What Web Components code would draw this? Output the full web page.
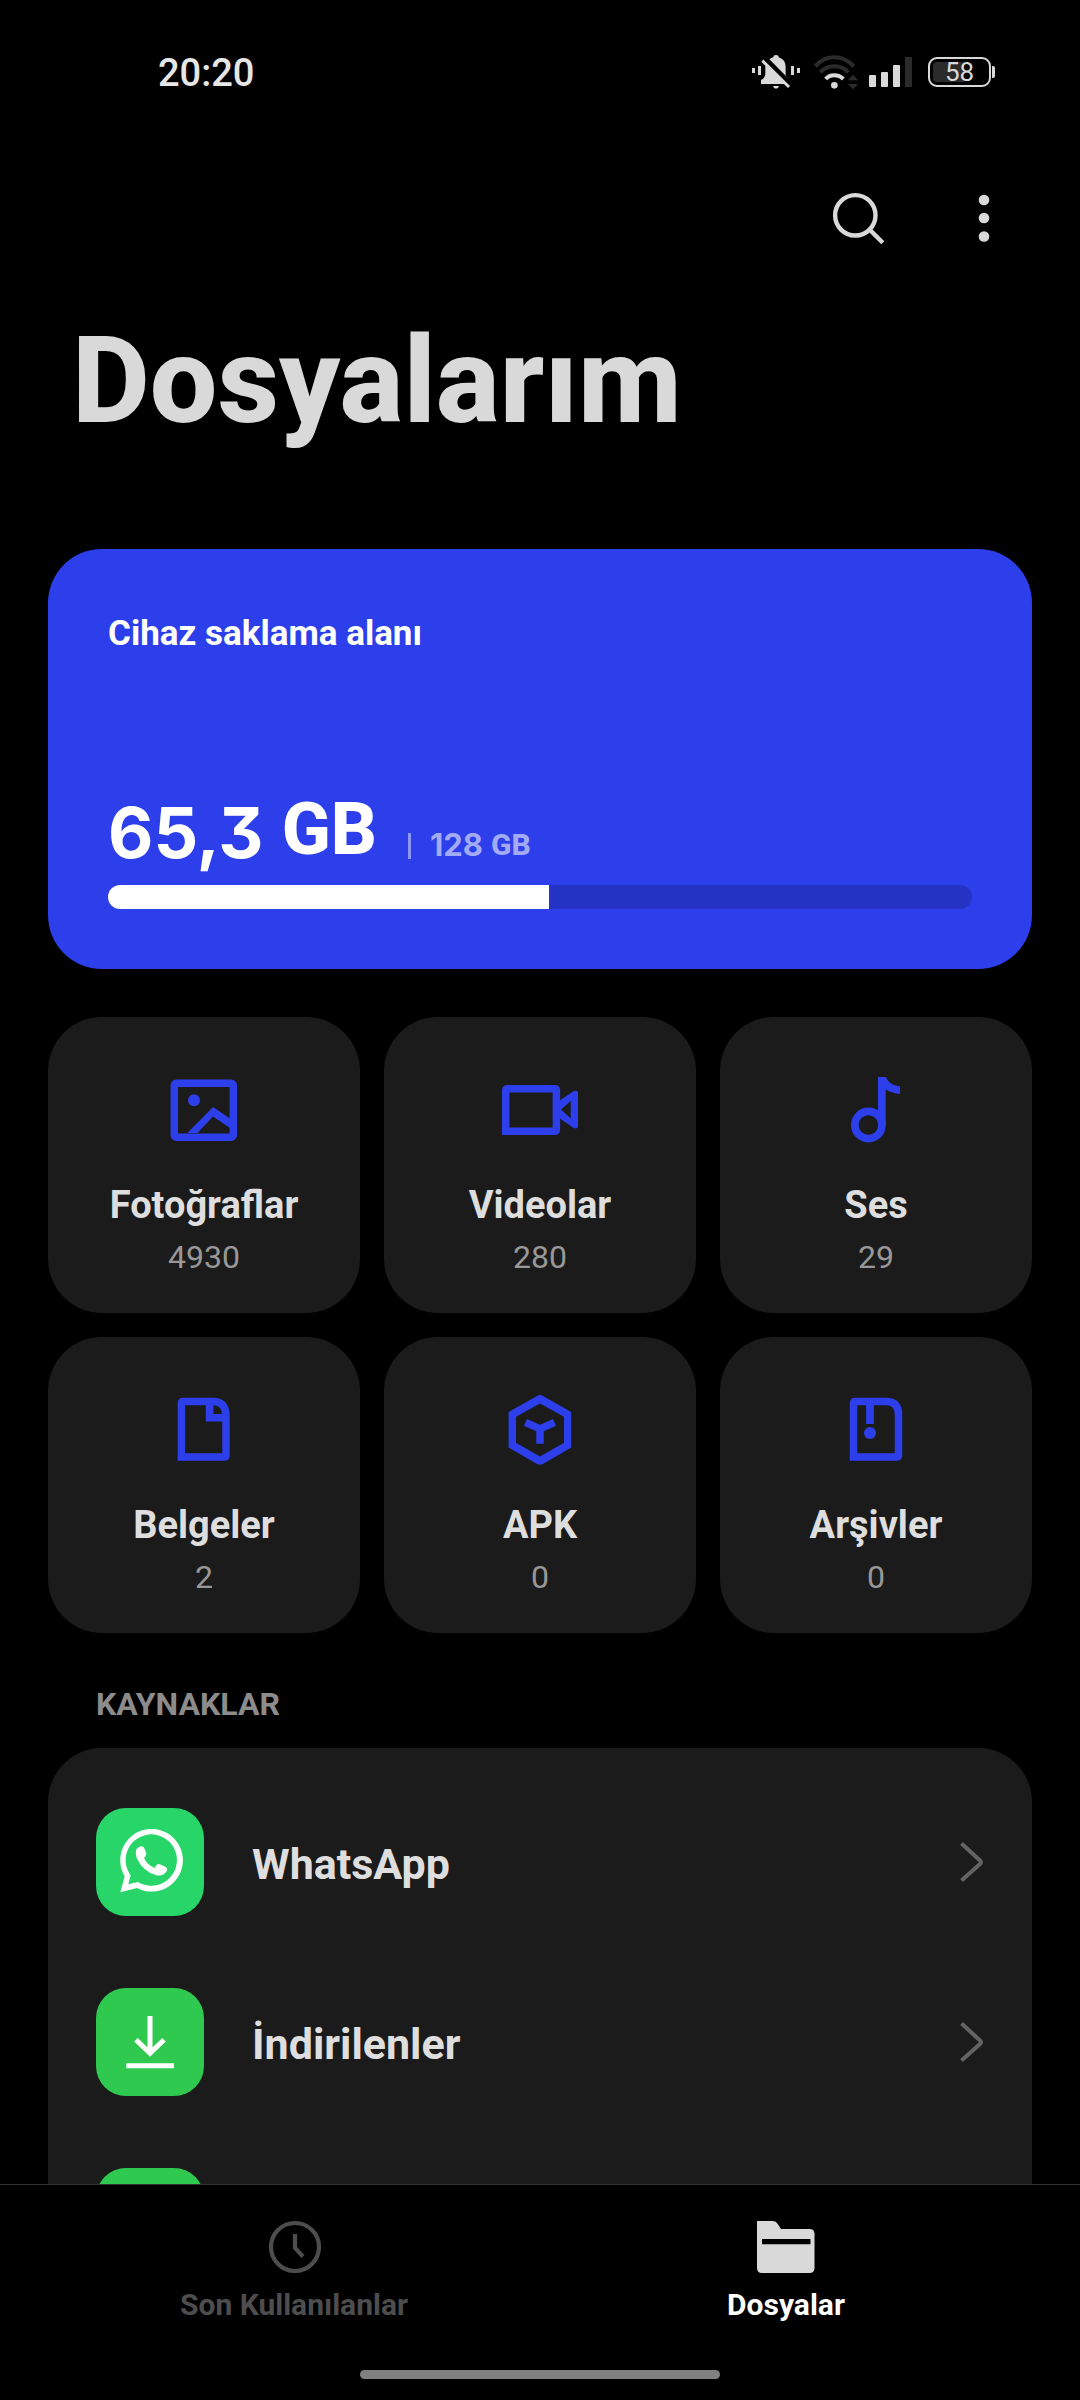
<!DOCTYPE html>
<html lang="tr">
<head>
<meta charset="utf-8">
<meta name="viewport" content="width=device-width, initial-scale=1">
<title>Dosyalarım</title>
<style>
  html, body { margin: 0; height: 100%; background: #000; }
  body { font-family: Roboto, "Noto Sans", sans-serif; color: #dcdcdc; }
</style>
</head>
<body>
<files-app></files-app>

<script>
const ICONS = {
  muted: ['96 75 144 102', `<g fill="#d9d9d9"><path d="M160 82a8 7 0 0 1 16 0q21 6 21 31v22q1 6 9 11v0l-58-58q5-4 12-6zM136 103l60 59h-73v-12q13-6 13-20zM159 168h18q-2 8-9 8t-9-8z"/><path d="M96 114h9v15h-9zM114 108h9v27h-9zM213 108h9v27h-9zM231 114h9v15h-9z"/></g><path d="M127 92l80 79" stroke="#d9d9d9" stroke-width="9"/><path d="M134 86l80 79" stroke="#000" stroke-width="6"/>`],
  wifi: ['282 72 132 105', `<g fill="none" stroke-width="12"><g stroke="#2b2b2b"><path d="M286 106q24-27 57-27t58 27"/><path d="M301 124q17-18 42-18t42 18"/></g><path d="M317 144q10-11 26-11t27 11" stroke="#d9d9d9"/></g><circle cx="343" cy="163" r="10" fill="#d9d9d9"/><path d="M383 148l16-17 15 17zM383 159h31l-15 16z" fill="#2b2b2b"/>`],
  signal: ['447 81 129 90', `<g fill="#d9d9d9"><rect x="447" y="135" width="21" height="36" rx="3"/><rect x="483" y="126" width="21" height="45" rx="3"/><rect x="519" y="105" width="21" height="66" rx="3"/></g><rect x="555" y="81" width="21" height="90" rx="3" fill="#2b2b2b"/>`],
  search: ['0 0 96 96', `<circle cx="45.300" cy="45.300" r="20.200" fill="none" stroke="#d9d9d9" stroke-width="4.400"/><path d="M59.500 59.500l13.300 13.300" stroke="#d9d9d9" stroke-width="4.400"/>`],
  more: ['0 0 96 96', `<g fill="#d9d9d9"><circle cx="48" cy="30" r="5.300"/><circle cx="48" cy="48" r="5.300"/><circle cx="48" cy="66.500" r="5.300"/></g>`],
  photo: ['0 0 96 96', `<rect x="18.300" y="21.300" width="59" height="54" rx="2" fill="none" stroke="currentColor" stroke-width="7.500"/><circle cx="38" cy="38.300" r="6" fill="currentColor"/><path d="M31.300 71L57 45l17 11.500v9.500L57 54.500 41.400 71z" fill="currentColor"/>`],
  video: ['0 0 96 96', `<path d="M13.700 69.300V28.700q0-2 2-2h46.700q2 0 2 2v38.600q0 2-2 2z" fill="none" stroke="currentColor" stroke-width="7.500"/><path fill-rule="evenodd" fill="currentColor" d="M67 39L81 29.600q5-2.600 5 2v31.800q0 4.600-5 2L67 56zM69 47.500l9.700 9V39z"/>`],
  audio: ['0 0 96 96', `<circle cx="40.400" cy="63" r="13.600" fill="none" stroke="currentColor" stroke-width="7.600"/><path d="M50 63V15h7.700q4.300 9 14.300 9.300v7.600q-8-.4-14.300-4.400V63z" fill="currentColor"/>`],
  doc: ['0 0 96 96', `<path d="M25.400 75V21.500q0-2 2-2H57q13 0 13 15V73q0 2-2 2z" fill="none" stroke="currentColor" stroke-width="7.500"/><path d="M53.600 20v15.800H70" fill="none" stroke="currentColor" stroke-width="7.600"/>`],
  apk: ['0 0 96 96', `<path d="M48 13q1.800 0 3 .9L79.200 30v35.500L51 82q-3 1.600-6 0L16.600 65.500V30L45 13.900q1.200-.9 3-.9zM48 21.500L24 34.800v26L48 74.500l24-13.700v-26z" fill="currentColor" fill-rule="evenodd"/><path d="M33.500 40.400L48 47l14.500-6.600M48 46v15.700" fill="none" stroke="currentColor" stroke-width="7.500"/>`],
  archive: ['0 0 96 96', `<path d="M25.500 75V21.500q0-2 2-2H58q12.500 0 12.500 13V73q0 2-2 2z" fill="none" stroke="currentColor" stroke-width="7.500"/><path d="M42 19v23" stroke="currentColor" stroke-width="7.800"/><circle cx="42" cy="51" r="6" fill="currentColor"/>`],
  whatsapp: ['0 0 324 324', `<g transform="translate(-168 -414)" fill="#fff"><path fill-rule="evenodd" d="M241 667L254 619A94 94 0 1 1 291 654zM265 643L294 636A77 77 0 1 0 272 616z"/><path d="M289 538q11-12 20-8 5 3 10 20 1 8-7 14 9 20 32 30 6-13 12-12 11 3 22 10 6 4 2 12-11 16-31 12-39-11-58-50-6-16-2-28z"/></g>`],
  download: ['0 0 324 324', `<g fill="none" stroke="#fff" stroke-width="15"><path d="M162 84v112M120 155l42 41 42-41M91 233h143"/></g>`],
  chevron: ['0 0 24 42', `<path d="M1.500 2.500L20 19.400q2 1.800 0 3.600L1.500 39.500" fill="none" stroke="#636363" stroke-width="4"/>`],
  clock: ['0 0 60 60', `<g fill="none" stroke="currentColor" stroke-width="4.200"><circle cx="31" cy="30" r="24"/><path d="M31 17v14l8 8.500"/></g>`],
  folder: ['0 0 60 60', `<path fill="#d9d9d9" fill-rule="evenodd" d="M1 4h16q3 0 4.400 2.500L25 12h28.500q5 0 5 5v34q0 5-5 5H6q-5 0-5-5zM6 22v5.300h48.500V22z"/>`]
};

class Base extends HTMLElement {
  connectedCallback() {
    if (this.shadowRoot) return;
    this.attachShadow({ mode: 'open' }).innerHTML = this.render();
  }
  attr(name) { return this.getAttribute(name) || ''; }
}

customElements.define('fm-icon', class extends Base {
  render() {
    const [box, body] = ICONS[this.attr('name')];
    return `<style>
      :host { display: block; flex: none; }
      svg { display: block; width: 100%; height: 100%; }
    </style><svg viewBox="${box}" aria-hidden="true">${body}</svg>`;
  }
});

customElements.define('status-bar', class extends Base {
  render() {
    return `<style>
      :host { display: flex; align-items: center; flex: none; height: 144px; padding: 0 85px 0 158px; }
      time { flex: 1; padding-top: 2px; font-size: 38px; font-weight: 500; line-height: 44px; color: #e6e6e6; }
      .bell { width: 48px; height: 34px; margin-right: 14px; }
      .wifi { width: 44px; height: 35px; margin-right: 11px; }
      .signal { width: 43px; height: 30px; margin-right: 16px; }
      .battery { display: flex; align-items: center; gap: 1px; }
      .cell { box-sizing: border-box; width: 63px; height: 30px; border: 2px solid #d9d9d9; border-radius: 9px; padding: 3px;
        display: flex; }
      .level { flex: 1; border-radius: 4px; background: linear-gradient(90deg, #2b2b2b 58%, #000 58%);
        font-size: 26px; line-height: 21px; text-align: center; color: #d9d9d9; }
      .nub { width: 3px; height: 12px; border-radius: 0 2px 2px 0; background: #d9d9d9; }
    </style>
    <time>20:20</time>
    <fm-icon class="bell" name="muted"></fm-icon>
    <fm-icon class="wifi" name="wifi"></fm-icon>
    <fm-icon class="signal" name="signal"></fm-icon>
    <div class="battery"><div class="cell"><div class="level">58</div></div><div class="nub"></div></div>`;
  }
});

customElements.define('tool-button', class extends Base {
  render() {
    return `<style>
      :host { display: block; }
      button { display: block; border: 0; padding: 0; background: none; }
      fm-icon { width: 96px; height: 96px; }
    </style><button aria-label="${this.attr('label')}"><fm-icon name="${this.attr('icon')}"></fm-icon></button>`;
  }
});

customElements.define('storage-card', class extends Base {
  render() {
    const used = Number(this.attr('used').replace(',', '.'));
    const share = used / Number(this.attr('total')) * 100;
    return `<style>
      :host { display: block; padding: 64px 60px 60px; border-radius: 54px; background: #2d3fea; color: #fff; }
      h2 { margin: 0 0 139px; font-size: 35px; line-height: 42px; font-weight: 700; }
      .amounts { display: flex; align-items: flex-end; margin-bottom: 19px; font-weight: 800; }
      .num { font-family: Inter, Roboto, sans-serif; font-weight: 700; font-feature-settings: "cv09"; }
      .used, .total { display: flex; align-items: flex-end; }
      .used { gap: 18px; font-size: 72px; line-height: 72px; }
      .used .num { font-size: 70px; line-height: 66px; }
      .total { gap: 8px; margin-bottom: 6px; font-size: 30px; line-height: 30px; color: #a3abf8; }
      .total .num { font-size: 31px; }
      .rule { width: 3px; height: 26px; margin: 0 19px 7px 31px; background: #8e98f4; }
      .track { height: 24px; border-radius: 12px; overflow: hidden; background: #2534c5; }
      .fill { height: 100%; width: ${share}%; background: #fff; }
    </style>
    <h2><slot></slot></h2>
    <div class="amounts">
      <div class="used"><span class="num">${this.attr('used')}</span><span>GB</span></div>
      <div class="rule"></div>
      <div class="total"><span class="num">${this.attr('total')}</span><span>GB</span></div>
    </div>
    <div class="track"><div class="fill"></div></div>`;
  }
});

customElements.define('category-tile', class extends Base {
  render() {
    return `<style>
      :host { display: block; }
      button { display: flex; flex-direction: column; align-items: center; width: 100%; border: 0; margin: 0;
        padding: 45px 0 36px; border-radius: 54px; background: #1b1b1b; color: #dedede; font: inherit; }
      fm-icon { width: 96px; height: 96px; margin-bottom: 24px; color: #2d3fea; }
      .label { font-size: 38px; line-height: 46px; font-weight: 700; margin-bottom: 9px; }
      .count { font-size: 32px; line-height: 40px; color: #989898; }
    </style>
    <button><fm-icon name="${this.attr('icon')}"></fm-icon><span class="label"><slot></slot></span><span class="count">${this.attr('count')}</span></button>`;
  }
});

customElements.define('source-row', class extends Base {
  render() {
    const icon = this.attr('icon');
    return `<style>
      :host { display: block; }
      a { display: flex; align-items: center; gap: 48px; padding: 36px 48px; color: #dedede; text-decoration: none;
        font-size: 43px; line-height: 50px; font-weight: 700; }
      .tile { flex: none; width: 108px; height: 108px; border-radius: 30px; background: ${this.attr('color')}; }
      .label { flex: 1; padding-top: 4px; }
      .chevron { width: 24px; height: 42px; }
    </style>
    <a href="#"><span class="tile">${icon ? `<fm-icon name="${icon}"></fm-icon>` : ''}</span><span class="label"><slot></slot></span><fm-icon class="chevron" name="chevron"></fm-icon></a>`;
  }
});

customElements.define('nav-tab', class extends Base {
  render() {
    return `<style>
      :host { display: block; flex: 1; color: #4d4d4d; }
      :host([selected]) { color: #fff; }
      button { display: flex; flex-direction: column; align-items: center; gap: 10px; width: 100%; border: 0; margin: 0; padding: 0;
        background: none; color: inherit; font: inherit; font-size: 30px; line-height: 36px; font-weight: 700; }
      fm-icon { width: 60px; height: 60px; }
    </style><button><fm-icon name="${this.attr('icon')}"></fm-icon><slot></slot></button>`;
  }
});

customElements.define('bottom-nav', class extends Base {
  render() {
    return `<style>
      :host { display: block; flex: none; border-top: 1px solid #333; padding: 32px 48px 21px; background: #000; }
      nav { display: flex; margin-bottom: 47px; }
      .home { width: 360px; height: 9px; margin: 0 auto; border-radius: 5px; background: #808080; }
    </style><nav><slot></slot></nav><div class="home"></div>`;
  }
});

customElements.define('files-app', class extends Base {
  render() {
    return `<style>
      :host { display: flex; flex-direction: column; height: 100vh; }
      .toolbar { display: flex; justify-content: flex-end; gap: 30px; margin: 26px 48px 45px; }
      h1 { margin: 0 72px 98px; font-size: 120px; line-height: 140px; font-weight: 800; color: #d9d9d9; }
      main { flex: 1; min-height: 0; overflow: hidden; padding: 0 48px; }
      .tiles { display: grid; grid-template-columns: repeat(3, 1fr); gap: 24px; margin-top: 48px; }
      h3 { margin: 51px 48px 24px; font-size: 32px; line-height: 40px; font-weight: 700; color: #8c8c8c; }
      .sources { padding: 24px 0; border-radius: 54px; background: #1b1b1b; }
    </style>
    <status-bar></status-bar>
    <div class="toolbar">
      <tool-button icon="search" label="Ara"></tool-button>
      <tool-button icon="more" label="Menü"></tool-button>
    </div>
    <h1>Dosyalarım</h1>
    <main>
      <storage-card used="65,3" total="128">Cihaz saklama alanı</storage-card>
      <div class="tiles">
        <category-tile icon="photo" count="4930">Fotoğraflar</category-tile>
        <category-tile icon="video" count="280">Videolar</category-tile>
        <category-tile icon="audio" count="29">Ses</category-tile>
        <category-tile icon="doc" count="2">Belgeler</category-tile>
        <category-tile icon="apk" count="0">APK</category-tile>
        <category-tile icon="archive" count="0">Arşivler</category-tile>
      </div>
      <h3>KAYNAKLAR</h3>
      <div class="sources">
        <source-row icon="whatsapp" color="#28d568">WhatsApp</source-row>
        <source-row icon="download" color="#30c94f">İndirilenler</source-row>
        <source-row color="#30c94f"></source-row>
      </div>
    </main>
    <bottom-nav>
      <nav-tab icon="clock">Son Kullanılanlar</nav-tab>
      <nav-tab icon="folder" selected>Dosyalar</nav-tab>
    </bottom-nav>`;
  }
});
</script>
</body>
</html>
